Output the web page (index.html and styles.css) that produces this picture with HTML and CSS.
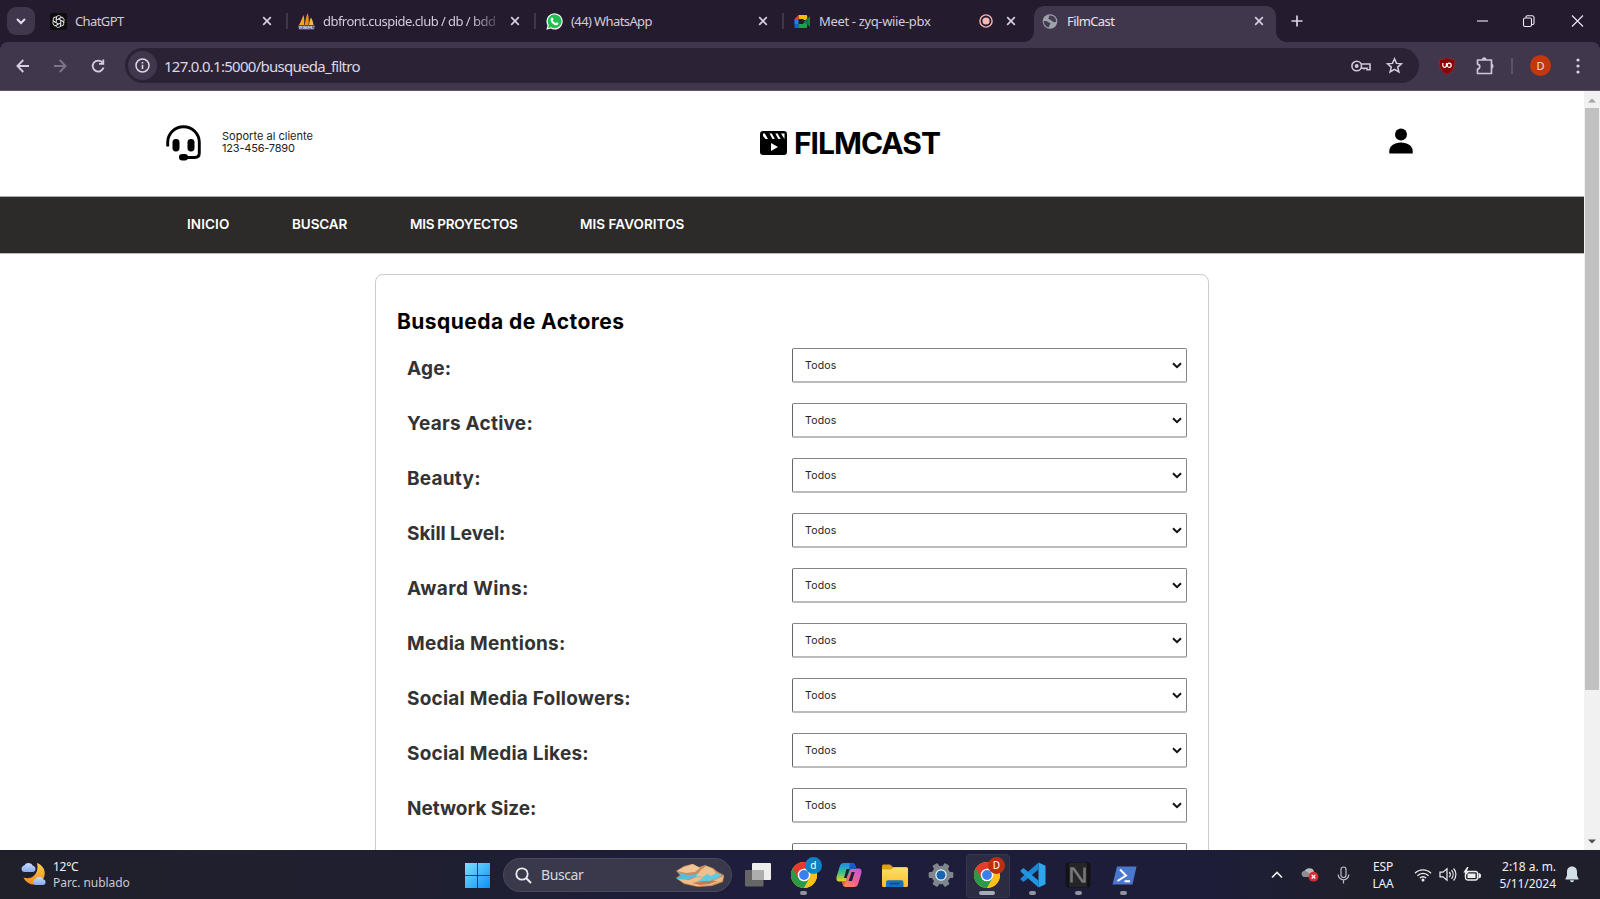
FILE: index.html
```html
<!DOCTYPE html>
<html lang="es">
<head>
<meta charset="utf-8">
<title>FilmCast</title>
<link rel="stylesheet" href="styles.css">
</head>
<body>
<svg width="0" height="0" class="defs" aria-hidden="true">
  <defs>
    <linearGradient id="win" x1="0" y1="0" x2="1" y2="1"><stop offset="0" stop-color="#7fe0ff"/><stop offset="1" stop-color="#0a90f5"/></linearGradient>
    <linearGradient id="folder" x1="0" y1="0" x2="0" y2="1"><stop offset="0" stop-color="#ffdf6b"/><stop offset="1" stop-color="#fbbc2c"/></linearGradient>
    <linearGradient id="copA" x1="0" y1="0" x2="0" y2="1"><stop offset="0" stop-color="#1b8cf0"/><stop offset=".5" stop-color="#37c08a"/><stop offset="1" stop-color="#f4d01c"/></linearGradient>
    <linearGradient id="copB" x1="1" y1="0" x2="0" y2="1"><stop offset="0" stop-color="#b657e8"/><stop offset=".5" stop-color="#f4608e"/><stop offset="1" stop-color="#ff9a4a"/></linearGradient>
    <linearGradient id="moon" x1="0" y1="0" x2="0" y2="1"><stop offset="0" stop-color="#ffd04a"/><stop offset="1" stop-color="#f08a20"/></linearGradient>
    <linearGradient id="cloud" x1="0" y1="0" x2="0" y2="1"><stop offset="0" stop-color="#c8dcff"/><stop offset="1" stop-color="#86abf0"/></linearGradient>
    <symbol id="x" viewBox="0 0 10 10"><path d="M1.2 1.2l7.6 7.6M8.8 1.2L1.2 8.8" fill="none" stroke="currentColor" stroke-width="1.7"/></symbol>
    <symbol id="chrome" viewBox="0 0 26 26">
      <circle cx="13" cy="13" r="13" fill="#fbc116"/>
      <path d="M1.74 6.5A13 13 0 0 0 13 26l5.6-9.8L13 13z" fill="#2a9a48"/>
      <path d="M13 6.5h11.26A13 13 0 0 1 13 26l5.63-9.75z" fill="#fbc116"/>
      <path d="M1.74 6.5A13 13 0 0 1 24.26 6.5H13L7.4 16.2z" fill="#e33b2e"/>
      <circle cx="13" cy="13" r="6.3" fill="#fff"/><circle cx="13" cy="13" r="4.9" fill="#3b7ff0"/>
    </symbol>
  </defs>
</svg>

<div class="tabstrip">
  <div class="tab-search"><svg width="10" height="7" viewBox="0 0 10 7"><path d="M1 1l4 4 4-4" fill="none" stroke="#e6deee" stroke-width="2"/></svg></div>
  <div class="tab first">
    <svg class="fav" viewBox="0 0 17 17"><rect width="17" height="17" rx="2" fill="#0e0d10"/><g fill="none" stroke="#e4e4e4" stroke-width=".9" stroke-linejoin="round"><path id="petal" d="M6.300 9.700V5a2.500 2.500 0 0 1 4.600-1.300M8.500 5.900l3.700-2.100"/><path d="M6.300 9.700V5a2.500 2.500 0 0 1 4.600-1.300M8.500 5.900l3.700-2.100" transform="rotate(60 8.500 8.500)"/><path d="M6.300 9.700V5a2.500 2.500 0 0 1 4.600-1.300M8.500 5.900l3.700-2.100" transform="rotate(120 8.500 8.500)"/><path d="M6.300 9.700V5a2.500 2.500 0 0 1 4.600-1.300M8.500 5.900l3.700-2.100" transform="rotate(180 8.500 8.500)"/><path d="M6.300 9.700V5a2.500 2.500 0 0 1 4.600-1.300M8.500 5.900l3.700-2.100" transform="rotate(240 8.500 8.500)"/><path d="M6.300 9.700V5a2.500 2.500 0 0 1 4.600-1.300M8.500 5.900l3.700-2.100" transform="rotate(300 8.500 8.500)"/></g></svg>
    <span class="tab-title">ChatGPT</span><svg class="tab-x"><use href="#x"/></svg>
  </div>
  <div class="tab">
    <svg class="fav" viewBox="0 0 17 17"><path d="M1 12C3 9 4 5 5.500 2c1 3 .8 7 .5 10z" fill="#f6a623"/><path d="M6.500 12c1-4 1.500-8 3-12 1.500 4 1.500 8 1 12z" fill="#f08c1a"/><path d="M11 12c.4-3 .8-5 2-7.500 1.500 2.500 2.200 5 2.500 7.500z" fill="#f9b44a"/><path d="M0 12.500h17l-1 4H1z" fill="#777896"/><path d="M2 16v-3l2 1.500v-1M6 16v-3l2 3v-3M10 16v-3l2 2 1-2 1 3" stroke="#d5d5e4" fill="none" stroke-width=".8"/></svg>
    <span class="tab-title faded">dbfront.cuspide.club / db / bdd</span><svg class="tab-x"><use href="#x"/></svg>
  </div>
  <div class="tab">
    <svg class="fav" viewBox="0 0 17 17"><path d="M.4 16.700l1.100-4.300A8.100 8.100 0 1 1 4.800 15.600z" fill="#fff"/><path d="M2 15.100l.8-3A6.900 6.900 0 1 1 5.100 14.300z" fill="#1fc04f"/><path d="M5.800 4.600c.6-.4 1 0 1.100.5l.5 1.200c.1.500-.7.900-.6 1.300.6 1.200 1.500 2 2.700 2.500.500.1.800-.9 1.200-.8l1.500.8c.4.300.1 1.300-.4 1.700-1.200.900-3.100.300-4.700-.8-1.400-1.100-2.600-2.800-2.500-4.200 0-.9.500-1.800 1.200-2.200z" fill="#fff"/></svg>
    <span class="tab-title">(44) WhatsApp</span><svg class="tab-x"><use href="#x"/></svg>
  </div>
  <div class="tab last">
    <svg class="fav" viewBox="0 0 17 17"><path d="M4.500 2H12a1.200 1.200 0 0 1 1.200 1.200V7H9.500V6h-5z" fill="#fbba05"/><path d="M.5 6l4-4v4z" fill="#e33b2e"/><path d="M.5 6h4v5h-4z" fill="#2a7bf0"/><path d="M.5 11h4v4h-3a1 1 0 0 1-1-1z" fill="#1960d0"/><path d="M4.500 11h5V9.500h3.700v4.300A1.200 1.200 0 0 1 12 15H4.500z" fill="#13a64c"/><path d="M13.200 6L16 3.200v10.600L13.200 11z" fill="#0b8a40"/><path d="M9.500 8.500l3.700-3v6z" fill="#0f7a3a"/></svg>
    <span class="tab-title meet">Meet - zyq-wiie-pbx</span>
    <svg class="rec" viewBox="0 0 14 14"><circle cx="7" cy="7" r="6.100" fill="none" stroke="#f5b5ae" stroke-width="1.400"/><circle cx="7" cy="7" r="3.600" fill="#f9b8b0"/></svg>
    <svg class="tab-x"><use href="#x"/></svg>
  </div>
  <div class="tab active">
    <svg class="fav" viewBox="0 0 17 17"><circle cx="8" cy="8.500" r="7.300" fill="#9ea3ac"/><path d="M1.600 8c1.500-.2 3.500 0 4.500 1 .9.800 2.300.5 2.300 1.600 0 1-.9 1.100-1 2-.1.800-.4 2-1.300 2C3.500 13.500 1.700 11 1.600 8zM7.500 2.500c-.8 1-.2 1.500-.9 2.200-.6.600-.2 1.600.8 1.600 1.200 0 1.100 1.400 2.300 1.400 1 0 .9 1.600 2.100 1.600 1 0 1.800-.6 2.500-.6C14.200 5 11.500 2 7.500 2.500z" fill="#453d52"/></svg>
    <span class="tab-title">FilmCast</span><svg class="tab-x"><use href="#x"/></svg>
  </div>
  <svg class="plus" width="12" height="12" viewBox="0 0 12 12"><path d="M6 .5v11M.5 6h11" stroke="#d9d2e2" stroke-width="1.700"/></svg>
  <svg class="winctl" width="108" height="14" viewBox="0 0 108 14"><g fill="none" stroke="#eee9f3" stroke-width="1.100"><path d="M1 7h11"/><rect x="47.500" y="4" width="8" height="8.500" rx="1.500"/><path d="M50 3.800V3a1.200 1.200 0 0 1 1.200-1.200h5.300A1.700 1.700 0 0 1 58 3.500v5.800a1.200 1.200 0 0 1-1.200 1.200H56"/><path d="M96 1.500l11 11M107 1.500l-11 11"/></g></svg>
</div>

<div class="toolbar">
  <svg class="nav-icons" width="94" height="16" viewBox="0 0 94 16"><g fill="none" stroke-width="1.800"><path d="M13 8H1.500M7.300 2L1.400 8l5.900 6" stroke="#d5cedd"/><path d="M38 8h11.500M43.700 2l5.900 6-5.900 6" stroke="#7d7589"/><path d="M86.500 4.600A5.500 5.500 0 1 0 87.500 9.500" stroke="#d5cedd"/><path d="M87.300 1.500v4.300H83" stroke="#d5cedd"/></g></svg>
  <div class="omnibox">
    <div class="info"><svg width="15" height="15" viewBox="0 0 15 15"><circle cx="7.500" cy="7.500" r="6.500" fill="none" stroke="#ddd6e4" stroke-width="1.500"/><path d="M7.500 6.700v4.200M7.500 3.900v1.600" stroke="#ddd6e4" stroke-width="1.600"/></svg></div>
    <span class="url">127.0.0.1:5000/busqueda_filtro</span>
    <svg class="key" width="20" height="14" viewBox="0 0 20 14"><g fill="none" stroke="#cfc8d6" stroke-width="1.600"><path d="M10 5h9v5.800h-3V9.200h-3v1.300M13 9.200h-3"/><circle cx="5.700" cy="7" r="4.800"/></g><circle cx="5.700" cy="7" r="2" fill="#cfc8d6"/></svg>
    <svg width="17" height="17" viewBox="0 0 17 17"><path d="M8.500 1.800l2 4.600 5 .4-3.800 3.300 1.200 4.900-4.400-2.600L4.100 15l1.200-4.900L1.500 6.800l5-.4z" fill="none" stroke="#d5cedd" stroke-width="1.500"/></svg>
  </div>
  <svg class="ublock" width="16" height="18" viewBox="0 0 16 18"><path d="M8 .5c2.500 1.700 4.500 2 7.500 2 0 7.500-.5 11.500-7.500 15C1 14 .5 10 .5 2.500c3 0 5-.3 7.500-2z" fill="#850507" stroke="#a62628" stroke-width=".7"/><path d="M3.800 6v2.500a1.800 1.800 0 0 0 3.600 0V6" fill="none" stroke="#fff" stroke-width="1.200"/><ellipse cx="10.200" cy="8.200" rx="2" ry="2.100" fill="none" stroke="#fff" stroke-width="1.200"/></svg>
  <svg class="puzzle" width="18" height="19" viewBox="0 0 18 19"><path d="M1.500 4h14v13.500h-14v-4.300c3-.4 3-4.500 0-5z" fill="none" stroke="#cfc5d8" stroke-width="1.700" stroke-linejoin="round"/><path d="M5.800 4a2.400 2.700 0 0 1 4.800 0zM15.500 7.800a2 2.400 0 0 1 0 4.800z" fill="#cfc5d8"/></svg>
  <span class="tool-sep"></span>
  <span class="avatar">D</span>
  <svg class="dots" width="4" height="16" viewBox="0 0 4 16"><g fill="#d9d2e2"><circle cx="2" cy="2" r="1.600"/><circle cx="2" cy="8" r="1.600"/><circle cx="2" cy="14" r="1.600"/></g></svg>
</div>

<div class="viewport">
  <div class="page">
    <header class="header">
      <div class="support">
        <svg width="36" height="36" viewBox="0 0 36 36"><path d="M1.700 21.500V17.500a15.800 15.800 0 0 1 31.600 0V28q0 4.500-4.500 4.500H18" fill="none" stroke="#000" stroke-width="2.900"/><rect x="6.500" y="14" width="7" height="12.500" rx="3.400"/><rect x="21.500" y="14" width="7" height="12.500" rx="3.400"/><rect x="13" y="29" width="9" height="6.500" rx="3.200"/></svg>
        <div class="support-text"><div class="s1">Soporte al cliente</div><div class="s2">123-456-7890</div></div>
      </div>
      <div class="logo">
        <svg width="27" height="24" viewBox="0 0 27 24"><rect width="27" height="24" rx="3.200"/><path d="M3 2.500h1.800l3.200 5.500H5.500L3 5zM9.500 2.500h2.300l3 5.500h-2.300zM15.300 2.500h2.300l3 5.500h-2.300zM21 2.500h3.500V8z" fill="#fff"/><path d="M11 12l7 4-7 4z" fill="#fff"/></svg>
        <span>FILMCAST</span>
      </div>
      <svg class="user" width="24" height="26" viewBox="0 0 24 26"><circle cx="12" cy="6.600" r="6"/><path d="M.3 25.500v-2.300C.3 18 5 14.500 12 14.500s11.700 3.500 11.700 8.700v2.300z"/></svg>
    </header>
    <nav class="menu"><a class="m1">INICIO</a><a class="m2">BUSCAR</a><a class="m3">MIS PROYECTOS</a><a class="m4">MIS FAVORITOS</a></nav>
    <main class="card">
      <h1>Busqueda de Actores</h1>
      <div class="row"><label>Age:</label><div class="select">Todos<svg viewBox="0 0 10 7"><path d="M1 1.200l4 4 4-4"/></svg></div></div>
      <div class="row"><label>Years Active:</label><div class="select">Todos<svg viewBox="0 0 10 7"><path d="M1 1.200l4 4 4-4"/></svg></div></div>
      <div class="row"><label>Beauty:</label><div class="select">Todos<svg viewBox="0 0 10 7"><path d="M1 1.200l4 4 4-4"/></svg></div></div>
      <div class="row"><label class="tight">Skill Level:</label><div class="select">Todos<svg viewBox="0 0 10 7"><path d="M1 1.200l4 4 4-4"/></svg></div></div>
      <div class="row"><label class="loose">Award Wins:</label><div class="select">Todos<svg viewBox="0 0 10 7"><path d="M1 1.200l4 4 4-4"/></svg></div></div>
      <div class="row"><label>Media Mentions:</label><div class="select">Todos<svg viewBox="0 0 10 7"><path d="M1 1.200l4 4 4-4"/></svg></div></div>
      <div class="row"><label>Social Media Followers:</label><div class="select">Todos<svg viewBox="0 0 10 7"><path d="M1 1.200l4 4 4-4"/></svg></div></div>
      <div class="row"><label>Social Media Likes:</label><div class="select">Todos<svg viewBox="0 0 10 7"><path d="M1 1.200l4 4 4-4"/></svg></div></div>
      <div class="row"><label class="tight">Network Size:</label><div class="select">Todos<svg viewBox="0 0 10 7"><path d="M1 1.200l4 4 4-4"/></svg></div></div>
      <div class="row"><label></label><div class="select"></div></div>
    </main>
  </div>
  <div class="scrollbar">
    <svg width="8" height="5" viewBox="0 0 8 5"><path d="M0 4.500L4 .5l4 4z" fill="#a3a3a3"/></svg>
    <div class="thumb"></div>
    <svg class="down" width="8" height="5" viewBox="0 0 8 5"><path d="M0 .5l4 4 4-4z" fill="#505050"/></svg>
  </div>
</div>

<footer class="taskbar">
  <div class="weather">
    <svg width="26" height="24" viewBox="0 0 26 24"><path d="M16 1c7 2.500 9.500 9.500 6.500 15.500C18.500 24.500 7 25 2.500 15.500 11 18.500 18.500 11.500 16 1z" fill="url(#moon)"/><path d="M3.500 10a3.300 3.300 0 0 1-.3-6.500A5 5 0 0 1 12 3.800a3.200 3.200 0 0 1 .3 6.200z" fill="url(#cloud)"/><path d="M14.500 23a2.900 2.900 0 0 1-.2-5.700 4.400 4.400 0 0 1 8-.1A3 3 0 0 1 22.500 23z" fill="url(#cloud)"/></svg>
    <div><div class="w1">12°C</div><div class="w2">Parc. nublado</div></div>
  </div>
  <svg class="start" width="25" height="25" viewBox="0 0 25 25"><path d="M0 0h12v12H0zM12.800 0H25v12H12.800zM0 12.800h12V25H0zM12.800 12.800H25V25H12.800z" fill="url(#win)"/></svg>
  <div class="search">
    <svg width="17" height="17" viewBox="0 0 17 17"><circle cx="7" cy="7" r="5.700" fill="none" stroke="#eceaf0" stroke-width="1.800"/><path d="M11 11l5 5" stroke="#eceaf0" stroke-width="2"/></svg>
    <span>Buscar</span>
    <svg class="art" width="50" height="23" viewBox="0 0 50 23"><path d="M1 7l8-5 8-2 7 3 6-2 8 3 5 4 6 3-1 7-11 4-14 1-14-3-8-6 4-3z" fill="#c98a5c"/><path d="M9 3l9-3 7 4-5 4-9 1-9-2z" fill="#f0c493"/><path d="M3 8l9 3 12-1-6 4-10 2-7-1 5-3z" fill="#4fc0dc"/><path d="M22 10l8-6 9 4 8 3-6 4-10 3-14 0z" fill="#5ccbe2"/><path d="M26 6l5-4 7 3 3 4-5 3-4-2-4 3-7-1z" fill="#efc08f"/><path d="M3 15l11 1 8-3 6 1-7 4 15 0 8-4 5-2-2 5-11 4-14 1-13-3z" fill="#f0bd89"/><path d="M17 19l12-2 14 0-9 3-9 1z" fill="#c07c4c"/></svg>
  </div>
  <div class="apps">
    <div class="app"><svg width="26" height="24" viewBox="0 0 26 24"><rect x="7" width="19" height="17" rx="1" fill="#ededed"/><rect y="7" width="18.500" height="16.500" rx="1" fill="#666"/><path d="M7 7h11.500v10H7z" fill="#adadad"/></svg></div>
    <div class="app"><svg width="26" height="26"><use href="#chrome"/></svg><b class="badge blue">d</b><i class="dot"></i></div>
    <div class="app"><svg width="26" height="24" viewBox="0 0 26 24"><path d="M8 0h8c2.200 0 3 1.400 3.500 3.500L20 6h-4.500L12 17c-.6 1.500-1 1.500-2 1.500H3.500C.8 18.500 0 16.500.7 13.500l3-10C4.500 1 5.800 0 8 0z" fill="url(#copA)"/><path d="M18 24h-8c-2.200 0-3-1.400-3.500-3.500L6 18h4.500L14 7c.6-1.500 1-1.500 2-1.500h6.500c2.700 0 3.500 2 2.800 5l-3 10C21.500 23 20.200 24 18 24z" fill="url(#copB)"/><path d="M14 0h2c2.200 0 3 1.400 3.500 3.500L20.200 6H16c-1.500 0-2 .5-2.500 2L12 12z" fill="#1559c8"/><path d="M10.500 6h3L10.800 15H8z" fill="#1e1d3b"/><path d="M15.700 9h3l-2.700 9h-3.400z" fill="#1e1d3b"/><path d="M11.500 12.500L8.500 22.500C7 22 6.300 20 6 18h4c1 0 1.500-.5 1.500-1z" fill="#f4602e"/></svg></div>
    <div class="app"><svg width="26" height="23" viewBox="0 0 26 23"><path d="M0 2a1.500 1.500 0 0 1 1.500-1.500H8L11 3h13.500A1.500 1.500 0 0 1 26 4.500V8H0z" fill="#e0a010"/><path d="M0 5.500h9L11.500 3.500h13A1.500 1.500 0 0 1 26 5v16.500A1.500 1.500 0 0 1 24.500 23h-23A1.500 1.500 0 0 1 0 21.500z" fill="url(#folder)"/><path d="M4 23v-4.500A2.200 2.200 0 0 1 6.200 16.300h13.100a2.200 2.200 0 0 1 2.200 2.200V23z" fill="#1271c0"/><path d="M8 19.600h9.500" stroke="#0a4d8c" stroke-width="1.600"/></svg></div>
    <div class="app"><svg width="26" height="26" viewBox="-13 -13 26 26"><g fill="#80868d"><circle r="9.300"/><rect x="-3" y="-12.300" width="6" height="24.600" rx="1.300" transform="rotate(30)"/><rect x="-3" y="-12.300" width="6" height="24.600" rx="1.300" transform="rotate(90)"/><rect x="-3" y="-12.300" width="6" height="24.600" rx="1.300" transform="rotate(150)"/></g><circle r="5.700" fill="#eef3f8"/><circle r="4.500" fill="#1565b0"/></svg></div>
    <div class="app current"><svg width="26" height="26"><use href="#chrome"/></svg><b class="badge red">D</b><i class="dot wide"></i></div>
    <div class="app"><svg width="26" height="26" viewBox="0 0 26 26"><path d="M18.500.5L25.500 3.700v18.600l-7 3.200z" fill="#2ea6ee"/><path d="M18.500.5v7L3.500 20 .7 17.800v-1.600z" fill="#1b86d2"/><path d="M18.500 25.500v-7L3.500 6 .7 8.200v1.600z" fill="#2196e0"/></svg><i class="dot"></i></div>
    <div class="app"><svg width="26" height="26" viewBox="0 0 26 26"><rect x=".5" y=".5" width="25" height="25" rx="3" fill="#121214"/><rect x="4" y="1" width="18" height="24" fill="#252527"/><path d="M6.500 20.500V6.500h2L17.500 19.500h2v-14" fill="none" stroke="#77777b" stroke-width="2.600"/></svg><i class="dot"></i></div>
    <div class="app"><svg width="25" height="19" viewBox="0 0 25 19"><path d="M5 .5h19.500L20.500 18.500H.5z" fill="#4b78cf"/><path d="M8 3.500l6 6-8.500 5.500M12.500 15.300H18" fill="none" stroke="#fff" stroke-width="2"/></svg><i class="dot"></i></div>
  </div>
  <div class="tray">
    <svg class="up" width="12" height="8" viewBox="0 0 12 8"><path d="M1 6.500l5-5 5 5" fill="none" stroke="#eee" stroke-width="1.700"/></svg>
    <svg class="drive" width="18" height="15" viewBox="0 0 18 15"><path d="M2.500 9.500A3 3 0 0 1 2 4.500C4 4.500 4 1.500 8 1.200c3-.3 5 1.300 5 4L10 10z" fill="#b9b9bb"/><path d="M2 4.500c3-1.500 6 .5 8 5.500H3A3 3 0 0 1 2 4.500z" fill="#8e8e92"/><circle cx="12.500" cy="9.700" r="4.900" fill="#d92a35"/><path d="M10.700 7.900l3.600 3.600M14.300 7.900l-3.600 3.600" stroke="#fff" stroke-width="1.300"/></svg>
    <svg class="mic" width="13" height="18" viewBox="0 0 13 18"><rect x="4" y="1" width="5" height="10.500" rx="2.500" fill="none" stroke="#bdbcc4" stroke-width="1.200"/><path d="M1.200 8.500a5.300 5.300 0 0 0 10.600 0M6.500 14v3.500" fill="none" stroke="#bdbcc4" stroke-width="1.200"/></svg>
    <div class="lang"><div>ESP</div><div>LAA</div></div>
    <svg class="wifi" width="18" height="14" viewBox="0 0 18 14"><g fill="none" stroke="#eee" stroke-width="1.300"><path d="M1 5.200a11.300 11.300 0 0 1 16 0M3.400 7.700a7.900 7.900 0 0 1 11.200 0M5.800 10.100a4.500 4.500 0 0 1 6.400 0"/></g><circle cx="9" cy="12" r="1.500" fill="#eee"/></svg>
    <svg class="vol" width="18" height="15" viewBox="0 0 18 15"><g fill="none" stroke="#eee" stroke-width="1.200"><path d="M1 5.200h3L8 1.800v11.400L4 9.800H1z"/><path d="M10.300 5a3.800 3.800 0 0 1 0 5M12.500 3.200a6.500 6.500 0 0 1 0 8.600M14.600 1.500a9 9 0 0 1 0 12"/></g></svg>
    <svg class="bat" width="18" height="15" viewBox="0 0 18 15"><rect x="2.500" y="4.500" width="12" height="8.500" rx="2" fill="none" stroke="#eee" stroke-width="1.300"/><rect x="4.500" y="6.500" width="8" height="4.500" fill="#eee"/><path d="M15.500 6.500a2 2 0 0 1 0 4.500" fill="#eee" stroke="#eee"/><path d="M4 0L.3 5.500h2.400L1.500 9.500 6.500 4H4L5.500 0z" fill="#eee"/></svg>
    <div class="clock"><div class="time">2:18 a. m.</div><div class="date">5/11/2024</div></div>
    <svg class="bell" width="14" height="17" viewBox="0 0 14 17"><path d="M7 .5c3.300 0 5 2.400 5 5.300v3.700l1.500 3.200v.8H.5v-.8L2 9.500V5.800C2 2.900 3.700.5 7 .5zM5 14.200h4c0 2.600-4 2.600-4 0z" fill="#d3dfe6"/></svg>
  </div>
</footer>
</body>
</html>
```
FILE: styles.css
```css
* { box-sizing: border-box; }
body { margin: 0; width: 1600px; height: 899px; overflow: hidden; display: flex; flex-direction: column; background: #241b2f; font-family: "Noto Sans", "Open Sans", sans-serif; }
svg { display: block; flex: none; }
.defs { position: absolute; }

/* Browser tabs */
.tabstrip { height: 42px; flex: none; display: flex; align-items: center; background: #241b2f; color: #d3cbdc; }
.tab-search { width: 28px; height: 28px; margin-left: 7px; border-radius: 9px; background: #40374c; display: flex; align-items: center; justify-content: center; }
.tab { width: 248px; height: 16px; padding: 0 14px 0 10px; display: flex; align-items: center; border-right: 2px solid #40374c; }
.tab.first { width: 253px; padding-left: 15px; }
.tab.last { border: 0; width: 250px; padding-right: 18px; }
.fav { width: 17px; height: 17px; margin-right: 8px; }
.tab-title { flex: 1; white-space: nowrap; font-size: 13px; line-height: 20px; letter-spacing: -0.6px; }
.tab-title.meet { letter-spacing: -0.35px; }
.tab-title.faded { flex: none; width: 178px; letter-spacing: -0.54px; -webkit-mask-image: linear-gradient(90deg, #000 148px, #0003 175px); mask-image: linear-gradient(90deg, #000 148px, #0003 175px); }
.tab-x { width: 10px; height: 10px; margin-left: auto; color: #d5cedd; }
.rec { width: 14px; height: 14px; margin-right: 13px; }
.tab.active { width: 242px; height: 36px; margin-top: 6px; padding: 0 12px 6px 8px; border: 0; border-radius: 10px 10px 0 0; background: #40374c; color: #e8e1ee; position: relative; }
.tab.active::before, .tab.active::after { content: ""; position: absolute; bottom: 0; width: 10px; height: 10px; }
.tab.active::before { left: -10px; background: radial-gradient(circle at 0 0, transparent 9.500px, #40374c 10px); }
.tab.active::after { right: -10px; background: radial-gradient(circle at 100% 0, transparent 9.500px, #40374c 10px); }
.plus { margin-left: 15px; }
.winctl { margin-left: auto; margin-right: 16px; }

/* Address bar */
.toolbar { height: 49px; flex: none; display: flex; align-items: center; padding-bottom: 1px; background: #40374c; border-bottom: 1px solid #5d5468; border-radius: 8px 8px 0 0; }
.nav-icons { margin-left: 16px; }
.omnibox { width: 1294px; height: 35px; margin-left: 15px; padding: 0 16px 0 3px; border-radius: 18px; background: #2b2335; display: flex; align-items: center; }
.info { width: 29px; height: 29px; border-radius: 50%; background: #40374c; display: flex; align-items: center; justify-content: center; }
.url { margin-left: 7px; font-size: 15px; letter-spacing: -0.73px; color: #ddd6e4; }
.key { margin-left: auto; margin-right: 15px; }
.ublock { margin-left: 20px; }
.puzzle { margin-left: 21px; }
.tool-sep { width: 2px; height: 16px; margin-left: 17px; background: #5d5269; }
.avatar { width: 21px; height: 21px; margin-left: 17px; border-radius: 50%; background: #c2380c; color: #f5dcd2; font-size: 11px; line-height: 21px; text-align: center; }
.dots { margin-left: 25px; }

/* Web page */
.viewport { height: 759px; flex: none; display: flex; overflow: hidden; background: #fff; font-family: Inter, sans-serif; }
.page { width: 1584px; height: 759px; overflow: hidden; }
.header { height: 106px; padding: 0 171px 2px 166px; display: flex; align-items: center; border-bottom: 1px solid #aaa; }
.support { width: 594px; display: flex; align-items: center; }
.support-text { margin-left: 20px; font-size: 11px; line-height: 11.700px; color: #222; }
.s1 { letter-spacing: 0.02px; }
.s2 { letter-spacing: -0.2px; }
.logo { display: flex; align-items: center; gap: 7px; font-size: 30px; font-weight: 700; letter-spacing: -1px; line-height: 36px; }
.user { margin-left: auto; margin-bottom: 3px; }
.menu { height: 57px; padding: 0 0 2px 187px; display: flex; align-items: center; background: #2d2b29; border-bottom: 1px solid #bbb; color: #fff; font-size: 13.500px; font-weight: 600; white-space: nowrap; }
.m1 { width: 105px; letter-spacing: 0.1px; }
.m2 { width: 118px; letter-spacing: -0.1px; }
.m3 { width: 170px; letter-spacing: -0.27px; }
.m4 { letter-spacing: 0.05px; }
.card { width: 834px; height: 800px; margin: 20px 0 0 375px; padding: 35px 20px 0; border: 1px solid #ccc; border-radius: 8px; }
h1 { margin: 0; height: 38px; padding-left: 1px; font-size: 21px; line-height: 23px; font-weight: 700; letter-spacing: 0.45px; }
.row { height: 35px; margin-bottom: 20px; display: flex; }
label { width: 396px; padding: 9px 0 0 11px; font-size: 19px; line-height: 24px; font-weight: 700; letter-spacing: 0.23px; color: #333; }
label.tight { letter-spacing: -0.05px; }
label.loose { letter-spacing: 0.4px; }
.select { width: 395px; height: 35px; padding: 0 4px 0 12px; border: 1px solid #858585; border-left-color: #666; border-bottom: 2px solid #bbb; border-radius: 2px; display: flex; align-items: center; justify-content: space-between; font-size: 10.500px; color: #222; letter-spacing: 0.2px; }
.select svg { width: 10px; height: 7px; fill: none; stroke: #111; stroke-width: 2; }
.scrollbar { width: 16px; background: #f1f1f1; display: flex; flex-direction: column; align-items: center; padding: 7px 0 6px; }
.thumb { width: 14px; height: 582px; margin-top: 5px; background: #c1c1c1; }
.down { margin-top: auto; }

/* Taskbar */
.taskbar { height: 49px; flex: none; display: flex; align-items: center; background: linear-gradient(90deg, #20202b, #1f1f30 25%, #1e1d3b 45%, #1d1d3a 75%, #1f1f2b 85%); color: #f0f0f4; font-size: 12px; line-height: 16px; white-space: nowrap; }
.weather { width: 445px; padding-left: 21px; display: flex; align-items: center; gap: 6px; }
.weather svg { margin-bottom: 2px; }
.w1 { letter-spacing: -0.3px; }
.w2 { color: #c9c9d0; letter-spacing: -0.05px; }
.start { margin-left: 20px; margin-top: 2px; }
.search { width: 229px; height: 34px; margin: 1px 0 0 13px; padding: 0 6px 0 11px; border: 1px solid #4b495c; border-radius: 17px; background: #3a394b; display: flex; align-items: center; }
.search span { margin-left: 9px; font-size: 14px; letter-spacing: -0.4px; color: #d8d7de; }
.art { margin-left: auto; }
.apps { display: flex; margin-left: 3px; }
.app { width: 45.800px; height: 49px; padding-top: 1px; display: flex; align-items: center; justify-content: center; position: relative; }
.current::before { content: ""; position: absolute; left: 2px; top: 4px; width: 42px; height: 42px; border-radius: 4px; background: #2b2b42; border: 1px solid #36364d; }
.current svg { position: relative; }
.badge { position: absolute; left: 24px; top: 7px; width: 17px; height: 17px; border-radius: 50%; font-size: 10px; line-height: 17px; font-weight: 400; text-align: center; color: #fff; }
.blue { background: #0c84c4; }
.red { background: #b8300e; }
.dot { position: absolute; left: 19px; top: 41px; width: 7px; height: 4px; border-radius: 2px; background: #92929e; }
.dot.wide { left: 15px; width: 16px; background: #a6acb8; }
.tray { margin-left: auto; display: flex; align-items: center; padding-right: 21px; }
.drive { margin-left: 18px; }
.mic { margin-left: 18px; }
.lang { width: 26px; margin-left: 20px; text-align: center; line-height: 17px; letter-spacing: -0.2px; }
.wifi { margin-left: 18px; }
.vol { margin-left: 7px; }
.bat { margin-left: 6px; }
.clock { width: 75px; text-align: right; line-height: 17px; letter-spacing: -0.05px; }
.bell { margin-left: 9px; }
```
